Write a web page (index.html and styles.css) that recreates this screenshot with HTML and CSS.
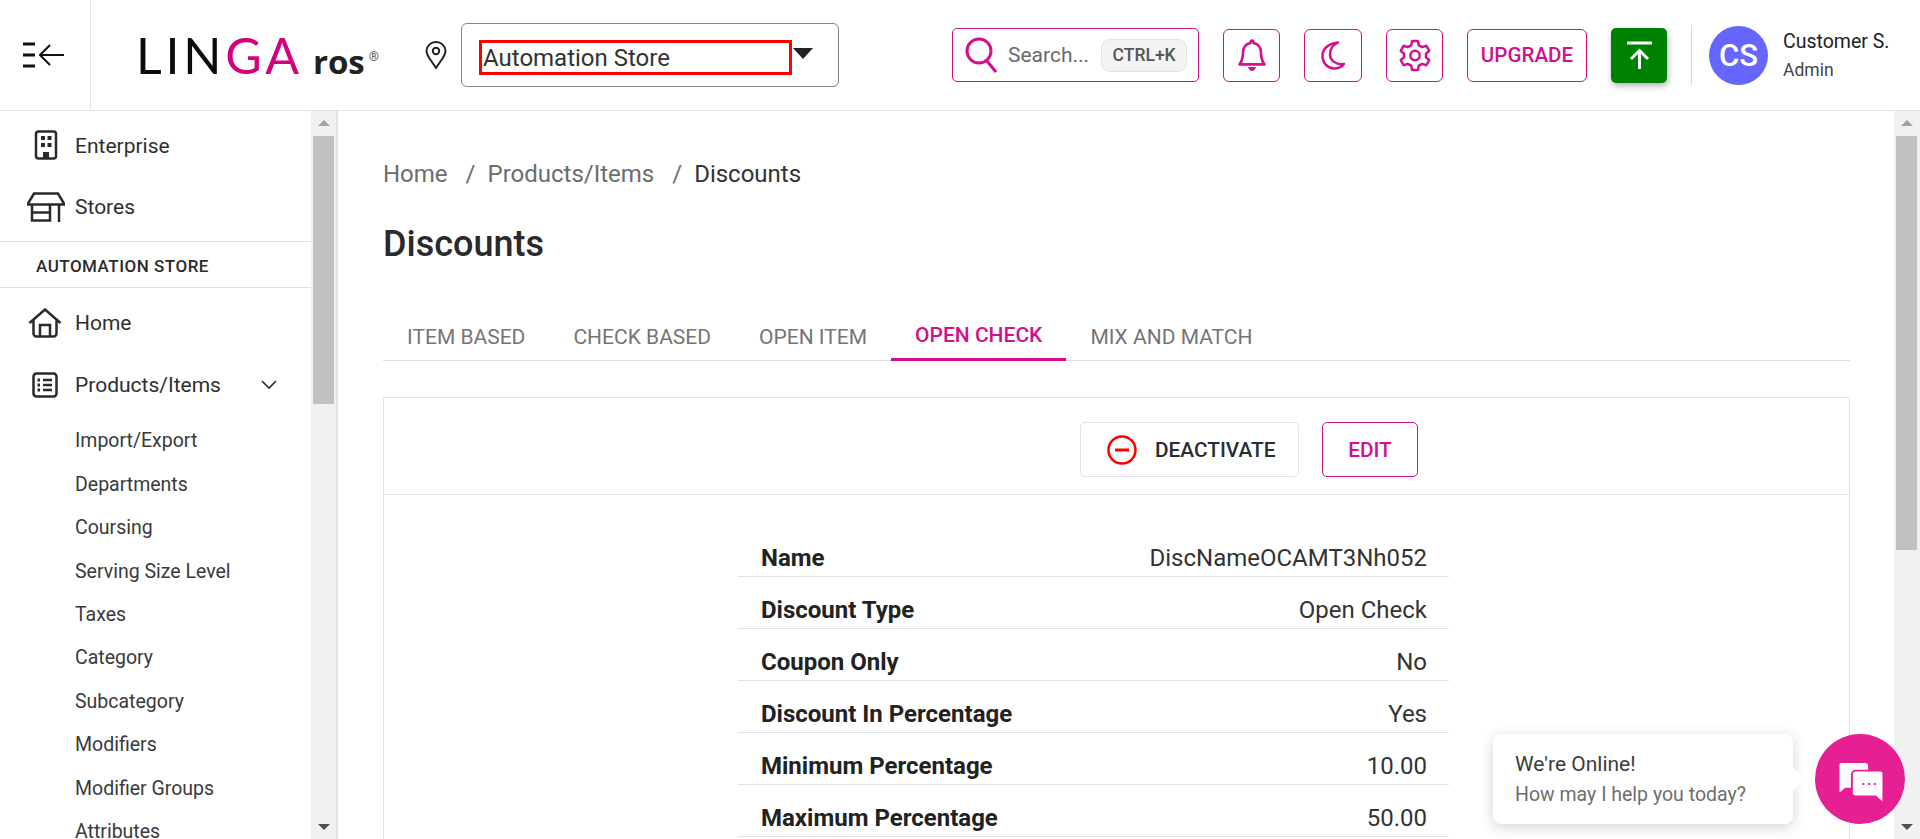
FILE: index.html
```html
<!DOCTYPE html>
<html lang="en">
<head>
<meta charset="utf-8">
<title>Discounts</title>
<link rel="stylesheet" href="styles.css">
</head>
<body>
<header class="topbar">
  <div class="toggle">
    <svg width="42" height="26" viewBox="0 0 42 26" fill="none" stroke="#111" stroke-width="3"><path d="M0 2h12M0 13h12M0 24h12"/><path stroke-width="2" d="M17 13h24M27 3 17 13l10 10"/></svg>
  </div>
  <div class="logo"><span class="logo-dark">LIN</span><span class="logo-pink">GA</span><span class="logo-ros">ros</span><span class="logo-reg">®</span></div>
  <svg class="pin" width="22" height="28" viewBox="0 0 22 28" fill="none" stroke="#222" stroke-width="2"><path d="M11 27C6 19 1.500 15 1.500 10a9.500 9 0 0 1 19 0c0 5-4.500 9-9.500 17z"/><circle cx="11" cy="10" r="3.200"/></svg>
  <div class="store-select">
    <div class="store-name">Automation Store</div>
    <div class="caret"></div>
  </div>
  <div class="actions">
    <div class="search">
      <svg width="34" height="36" viewBox="0 0 34 36" fill="none" stroke="#d0118c" stroke-width="3"><circle cx="14" cy="14" r="12"/><path d="m22 24 9 11"/></svg>
      <span class="search-text">Search...</span>
      <span class="kbd">CTRL+K</span>
    </div>
    <div class="icon-btn bell">
      <svg width="28" height="32" viewBox="0 0 28 32" fill="none" stroke="#d0118c" stroke-width="2.600" stroke-linejoin="round"><path d="M14 1.500c1 0 1.500 1 1.500 2.500 5 1 7.500 5 7.500 10 0 5 1 8 3.500 11.500h-25C4 22 5 19 5 14c0-5 2.500-9 7.500-10 0-1.500.5-2.500 1.500-2.500z"/><path stroke-width="1.500" d="M1 25h26"/><path fill="#d0118c" stroke="none" d="M10 28h8c-.5 2-2 4-4 4s-3.500-2-4-4z"/></svg>
    </div>
    <div class="icon-btn moon">
      <svg width="24" height="29" viewBox="0 0 24 29" fill="none" stroke="#d0118c" stroke-width="2.500" stroke-linejoin="round"><path d="M17 1.500C7 3 1.500 8 1.500 15 1.500 22 7 27.500 13 27.500c4 0 8-2 10-4.500C14 24 9 19 9 13 9 8 12 4 17 1.500z"/></svg>
    </div>
    <div class="icon-btn gear">
      <svg width="32" height="33" viewBox="1 1 22 22" fill="none" stroke="#d0118c" stroke-width="1.700" stroke-linejoin="round"><path d="M10 2h4l.6 3 2.400 1.300 2.800-1 2 3.500-2.300 2a6 6 0 0 1 0 2.400l2.300 2-2 3.500-2.800-1L14.600 19l-.6 3h-4l-.6-3L7 17.700l-2.800 1-2-3.500 2.300-2a6 6 0 0 1 0-2.400l-2.300-2 2-3.500 2.800 1L9.400 5z"/><circle cx="12" cy="12" r="3.200"/></svg>
    </div>
    <div class="upgrade">UPGRADE</div>
    <div class="publish">
      <svg width="25" height="28" viewBox="0 0 25 28" fill="none" stroke="#fff" stroke-width="3"><path d="M0 2h25"/><path d="M12.500 28V10M4 18l8.500-8.500L21 18"/></svg>
    </div>
    <div class="vsep"></div>
    <div class="avatar">CS</div>
    <div class="user">
      <div class="user-name">Customer S.</div>
      <div class="user-role">Admin</div>
    </div>
  </div>
</header>

<div class="body">
  <aside class="sidebar">
    <nav class="side-scroll">
      <div class="side-item top-first">
        <svg class="side-icon" width="24" height="30" viewBox="0 0 24 30" fill="none" stroke="#2a2a2a" stroke-width="2.500"><rect x="2" y="1.500" width="20" height="27" rx="2.500"/><path fill="#2a2a2a" stroke="none" d="M7 6h4v4H7zM13.500 6h4v4h-4zM7 13h4v4H7zM13.500 13h4v4h-4zM9 22h6v7H9z"/></svg>
        <span>Enterprise</span>
      </div>
      <div class="side-item">
        <svg class="side-icon store" width="38" height="30" viewBox="0 0 38 30" fill="none" stroke="#2a2a2a" stroke-width="2.500"><path d="M7 1.500h24l6 10v1H1v-1zM5 12.500v16h18v-16M5 20.500h18M32 12.500V30"/></svg>
        <span>Stores</span>
      </div>
      <div class="side-store">AUTOMATION STORE</div>
      <div class="side-item">
        <svg class="side-icon" width="34" height="30" viewBox="0 0 34 30" fill="none" stroke="#2a2a2a" stroke-width="2.500"><path d="M1.500 15 17 1.500 32.500 15M5.500 12v13.500a3 3 0 0 0 3 3h17a3 3 0 0 0 3-3V12M12 28V17h10v11"/></svg>
        <span>Home</span>
      </div>
      <div class="side-item">
        <svg class="side-icon" width="26" height="26" viewBox="0 0 26 26" fill="none" stroke="#2a2a2a" stroke-width="2.500"><rect x="1.500" y="1.500" width="23" height="23" rx="3"/><path d="M11 8h9M11 13h9M11 18h9"/><path stroke-width="3" d="M5.500 8h2.500M5.500 13h2.500M5.500 18h2.500"/></svg>
        <span>Products/Items</span>
        <svg class="chev" width="16" height="10" viewBox="0 0 16 10" fill="none" stroke="#2a2a2a" stroke-width="1.600"><path d="m1 1 7 7 7-7"/></svg>
      </div>
      <div class="sub-list">
        <div class="sub-item">Import/Export</div>
        <div class="sub-item">Departments</div>
        <div class="sub-item">Coursing</div>
        <div class="sub-item">Serving Size Level</div>
        <div class="sub-item">Taxes</div>
        <div class="sub-item">Category</div>
        <div class="sub-item">Subcategory</div>
        <div class="sub-item">Modifiers</div>
        <div class="sub-item">Modifier Groups</div>
        <div class="sub-item">Attributes</div>
      </div>
    </nav>
    <div class="scrollbar side-bar"><div class="arrow up"></div><div class="thumb side-thumb"></div><div class="arrow down"></div></div>
  </aside>

  <main class="main">
    <div class="content">
      <div class="crumbs"><span>Home</span><span class="slash">/</span><span>Products/Items</span><span class="slash">/</span><span class="crumb-now">Discounts</span></div>
      <h1 class="title">Discounts</h1>
      <div class="tabs">
        <div class="tab">ITEM BASED</div>
        <div class="tab">CHECK BASED</div>
        <div class="tab">OPEN ITEM</div>
        <div class="tab active">OPEN CHECK</div>
        <div class="tab">MIX AND MATCH</div>
      </div>
      <section class="card">
        <div class="card-tools">
          <div class="btn-deactivate">
            <svg width="30" height="30" viewBox="0 0 30 30" fill="none" stroke="#f00" stroke-width="2.500"><circle cx="15" cy="15" r="13.500"/><path stroke-width="3" d="M8 15h14"/></svg>
            <span>DEACTIVATE</span>
          </div>
          <div class="btn-edit">EDIT</div>
        </div>
        <div class="detail">
          <div class="row"><span class="key">Name</span><span class="val">DiscNameOCAMT3Nh052</span></div>
          <div class="row"><span class="key">Discount Type</span><span class="val">Open Check</span></div>
          <div class="row"><span class="key">Coupon Only</span><span class="val">No</span></div>
          <div class="row"><span class="key">Discount In Percentage</span><span class="val">Yes</span></div>
          <div class="row"><span class="key">Minimum Percentage</span><span class="val">10.00</span></div>
          <div class="row"><span class="key">Maximum Percentage</span><span class="val">50.00</span></div>
        </div>
      </section>
    </div>
    <div class="scrollbar main-bar"><div class="arrow up"></div><div class="thumb main-thumb"></div><div class="arrow down"></div></div>
    <div class="chat">
      <div class="bubble">
        <div class="bubble-title">We're Online!</div>
        <div class="bubble-sub">How may I help you today?</div>
      </div>
      <div class="chat-btn">
        <svg class="chat-icon" width="47" height="42" viewBox="0 0 48 44" fill="none"><path fill="#fff" d="M3 1h26a3 3 0 0 1 3 3v4H19a5 5 0 0 0-5 5v14H8l-6 5V3a2 2 0 0 1 1-2z"/><path fill="#fff" d="M19 10h26a2 2 0 0 1 2 2v29l-7-6H19a3 3 0 0 1-3-3V13a3 3 0 0 1 3-3z"/><path stroke="#e61f93" stroke-width="2" stroke-dasharray="2 4" d="M26 23h14"/></svg>
      </div>
    </div>
  </main>
</div>
</body>
</html>
```

FILE: styles.css
```css
* { box-sizing: border-box; }
html, body { margin: 0; height: 100%; overflow: hidden; background: #fff; }
body { font-family: Roboto, "Liberation Sans", sans-serif; color: #212529; }

.topbar { height: 111px; display: flex; align-items: center; border-bottom: 1px solid #e2e2e2; position: relative; }
.toggle { width: 91px; height: 110px; border-right: 1px solid #e2e2e2; display: flex; align-items: center; padding-left: 23px; flex: none; }
.logo { width: 334px; flex: none; padding-left: 45px; display: flex; align-items: baseline; line-height: 1; }
.logo-dark, .logo-pink { font-family: Lato, sans-serif; font-weight: 400; font-size: 50px; letter-spacing: 3.800px; color: #0a0a0a; }
.logo-pink { color: #d6007f; }
.logo-ros { font-family: "Open Sans", sans-serif; font-weight: 700; font-size: 33px; color: #222; margin-left: 10px; }
.logo-reg { font-size: 13px; color: #555; align-self: flex-start; margin-left: 4px; margin-top: 20px; }
.pin { flex: none; }
.store-select { width: 378px; height: 64px; margin-left: 14px; border: 1px solid #80868b; border-radius: 6px; display: flex; align-items: center; padding-left: 17px; flex: none; }
.store-name { width: 313px; height: 35px; margin-top: 5px; border: 3px solid #f00; font-size: 24px; line-height: 31px; padding-left: 1px; color: #333; }
.caret { width: 0; height: 0; margin-left: 1px; margin-top: -4px; border-left: 10px solid transparent; border-right: 10px solid transparent; border-top: 11px solid #222; }
.actions { display: flex; align-items: center; margin-left: 113px; }
.search { width: 247px; height: 54px; border: 1px solid #d0118c; border-radius: 5px; display: flex; align-items: center; padding-left: 12px; flex: none; }
.search-text { font-size: 21px; color: #6b6b6b; margin-left: 9px; }
.kbd { margin-left: 12px; width: 86px; height: 33px; background: #f3f3f3; border: 1px solid #e2e2e2; border-radius: 9px; font-size: 17.500px; font-weight: 500; color: #555; display: flex; align-items: center; justify-content: center; }
.icon-btn { height: 53px; border: 1px solid #d0118c; border-radius: 6px; display: flex; align-items: center; justify-content: center; flex: none; }
.bell { width: 57px; margin-left: 24px; }
.moon { width: 58px; margin-left: 24px; }
.gear { width: 57px; margin-left: 24px; }
.upgrade { width: 120px; height: 53px; margin-left: 24px; border: 1px solid #d0118c; border-radius: 6px; color: #d0118c; font-size: 20.600px; font-weight: 500; display: flex; align-items: center; justify-content: center; flex: none; }
.publish { width: 56px; height: 55px; margin-left: 24px; background: #008000; border-radius: 5px; box-shadow: 1px 3px 6px rgba(0,0,0,.3); display: flex; align-items: center; justify-content: center; flex: none; }
.vsep { width: 1px; height: 60px; background: #d8d8d8; margin-left: 24px; flex: none; }
.avatar { width: 59px; height: 59px; margin-left: 17px; border-radius: 50%; background: #6666ff; color: #fff; font-size: 31px; font-weight: 500; display: flex; align-items: center; justify-content: center; flex: none; }
.user { margin-left: 15px; }
.user-name { font-size: 19.500px; line-height: 28px; color: #222; }
.user-role { font-size: 17.500px; line-height: 26px; margin-top: 1px; color: #444; }

.body { display: flex; height: 728px; }
.sidebar { width: 338px; flex: none; display: flex; border-right: 2px solid #e2e2e2; position: relative; overflow: hidden; }
.side-scroll { width: 311px; flex: none; }
.side-item { height: 62px; display: flex; align-items: center; position: relative; padding-left: 75px; font-size: 21px; color: #2f2f2f; }
.top-first { margin-top: 3px; padding-top: 2px; }
.side-icon { position: absolute; left: 34px; top: 16px; }
.side-icon.store { left: 27px; }
.side-icon[width="34"] { left: 28px; }
.side-icon[width="26"] { left: 32px; top: 18px; }
.chev { margin-left: 40.500px; }
.side-store { height: 47px; margin-top: 3px; margin-bottom: 4px; padding-top: 2px; border-top: 1px solid #dedede; border-bottom: 1px solid #dedede; padding-left: 36px; display: flex; align-items: center; font-size: 17px; font-weight: 500; letter-spacing: .5px; color: #2b2b2b; }
.sub-list { padding-top: 3px; }
.sub-item { height: 43.450px; padding-left: 75px; display: flex; align-items: center; font-size: 19.500px; color: #3a3a3a; }

.scrollbar { width: 26px; background: #f1f1f1; position: relative; flex: none; }
.thumb { position: absolute; left: 2px; width: 21px; background: #c1c1c1; }
.side-thumb { top: 25px; height: 268px; }
.main-thumb { top: 25px; height: 414px; }
.arrow { position: absolute; left: 7px; width: 0; height: 0; border-left: 6px solid transparent; border-right: 6px solid transparent; }
.arrow.up { top: 9px; border-bottom: 6px solid #a3a3a3; }
.arrow.down { bottom: 9px; border-top: 6px solid #505050; }

.main { flex: 1; display: flex; position: relative; min-width: 0; }
.content { flex: 1; padding: 48px 44px 0 45px; min-width: 0; overflow: hidden; }
.crumbs { display: flex; font-size: 24px; line-height: 30px; color: #6d6d6d; }
.slash { margin: 0 12px 0 18px; }
.crumb-now { color: #333; }
.title { margin: 33px 0 0; font-size: 36px; line-height: 44px; font-weight: 500; color: #2a2a2a; }
.tabs { display: flex; margin-top: 42.500px; height: 52px; border-bottom: 1px solid #dedede; }
.tab { padding: 4.500px 24px 0; height: 52px; font-size: 21px; line-height: 49px; color: #757575; }
.tab.active { color: #d0118c; font-weight: 500; line-height: 44px; border-bottom: 3px solid #d0118c; }
.card { margin-top: 36px; border: 1px solid #e2e2e6; border-bottom: 0; height: 500px; }
.card-tools { height: 97px; border-bottom: 1px solid #e2e2e6; display: flex; align-items: center; padding: 8px 0 0 696px; }
.btn-deactivate { width: 219px; height: 55px; border: 1px solid #e2e2e6; border-radius: 5px; display: flex; align-items: center; padding-left: 26px; font-size: 20.800px; font-weight: 500; color: #2a2d33; flex: none; }
.btn-deactivate span { margin-left: 18px; }
.btn-edit { width: 96px; height: 55px; margin-left: 23px; border: 1px solid #d0118c; border-radius: 5px; color: #d0118c; font-size: 20.800px; font-weight: 500; display: flex; align-items: center; justify-content: center; flex: none; }
.detail { width: 711px; margin: 30px 0 0 354px; }
.row { height: 52px; padding: 16px 22px 0 23px; border-bottom: 1px solid #e2e2e6; display: flex; justify-content: space-between; align-items: center; font-size: 24px; }
.key { font-weight: 700; color: #222; }
.val { color: #333; }

.chat { position: absolute; right: 15px; top: 623px; display: flex; align-items: center; z-index: 3; }
.bubble { width: 300px; height: 90px; background: #fff; border-radius: 8px; box-shadow: 0 3px 14px rgba(0,0,0,.18); padding: 15px 22px; position: relative; margin-right: 22px; }
.bubble::after { content: ""; position: absolute; right: -8px; top: 36px; width: 18px; height: 18px; background: #fff; transform: rotate(45deg); border-radius: 2px; }
.bubble-title { color: #3c3c3c; font-size: 21px; line-height: 30px; }
.bubble-sub { color: #6e6e6e; font-size: 19.500px; line-height: 31px; }
.chat-btn { width: 90px; height: 90px; border-radius: 50%; background: #e61f93; display: flex; align-items: center; justify-content: center; }
.chat-icon { margin-top: 8px; }
```
